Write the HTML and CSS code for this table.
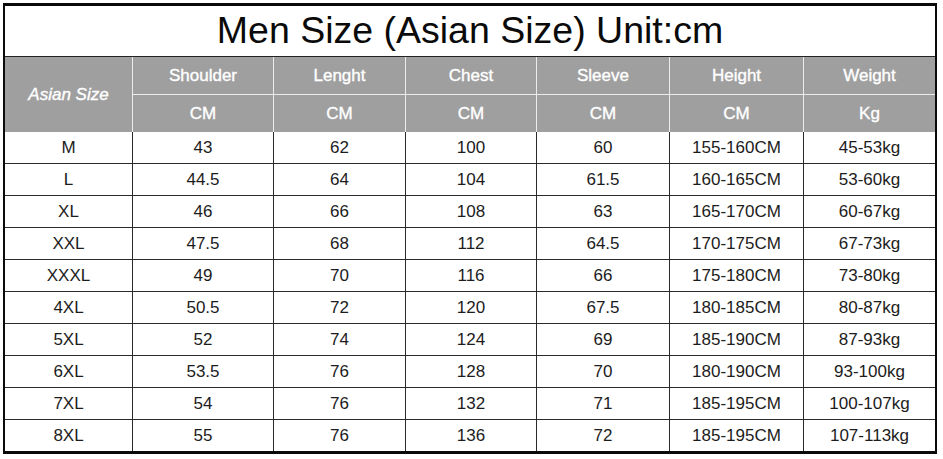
FILE: index.html
```html
<!DOCTYPE html>
<html>
<head>
<meta charset="utf-8">
<link rel="stylesheet" href="styles.css">
</head>
<body>
<div class="sheet">
  <div class="title">Men Size (Asian Size) Unit:cm</div>
  <div class="head">
    <div class="hc size">Asian Size</div>
    <div class="hc top">Shoulder</div>
    <div class="hc top">Lenght</div>
    <div class="hc top">Chest</div>
    <div class="hc top">Sleeve</div>
    <div class="hc top">Height</div>
    <div class="hc top end">Weight</div>
    <div class="hc">CM</div>
    <div class="hc">CM</div>
    <div class="hc">CM</div>
    <div class="hc">CM</div>
    <div class="hc">CM</div>
    <div class="hc end">Kg</div>
  </div>
  <div class="body">
    <div class="row"><div>M</div><div>43</div><div>62</div><div>100</div><div>60</div><div>155-160CM</div><div>45-53kg</div></div>
    <div class="row"><div>L</div><div>44.5</div><div>64</div><div>104</div><div>61.5</div><div>160-165CM</div><div>53-60kg</div></div>
    <div class="row"><div>XL</div><div>46</div><div>66</div><div>108</div><div>63</div><div>165-170CM</div><div>60-67kg</div></div>
    <div class="row"><div>XXL</div><div>47.5</div><div>68</div><div>112</div><div>64.5</div><div>170-175CM</div><div>67-73kg</div></div>
    <div class="row"><div>XXXL</div><div>49</div><div>70</div><div>116</div><div>66</div><div>175-180CM</div><div>73-80kg</div></div>
    <div class="row"><div>4XL</div><div>50.5</div><div>72</div><div>120</div><div>67.5</div><div>180-185CM</div><div>80-87kg</div></div>
    <div class="row"><div>5XL</div><div>52</div><div>74</div><div>124</div><div>69</div><div>185-190CM</div><div>87-93kg</div></div>
    <div class="row"><div>6XL</div><div>53.5</div><div>76</div><div>128</div><div>70</div><div>180-190CM</div><div>93-100kg</div></div>
    <div class="row"><div>7XL</div><div>54</div><div>76</div><div>132</div><div>71</div><div>185-195CM</div><div>100-107kg</div></div>
    <div class="row"><div>8XL</div><div>55</div><div>76</div><div>136</div><div>72</div><div>185-195CM</div><div>107-113kg</div></div>
  </div>
</div>
</body>
</html>
```

FILE: styles.css
```css
* { box-sizing: border-box; }
html, body { margin: 0; padding: 0; background: #ffffff; }
body { font-family: "Liberation Sans", Arial, sans-serif; }

.sheet {
  margin: 3px 0 0 3px;
  width: 934px;
  border-top: 3px solid #0a0a0a;
  border-bottom: 3px solid #0a0a0a;
  border-left: 2px solid #0a0a0a;
  border-right: 2px solid #0a0a0a;
  background: #fff;
}

.title {
  height: 51px;
  border-bottom: 1px solid #222;
  display: flex;
  align-items: center;
  justify-content: center;
  font-size: 37.5px;
  color: #0a0a0a;
  padding-bottom: 1px;
}

.head {
  display: grid;
  grid-template-columns: 128px 141px 132px 131px 133px 134px 131px;
  grid-template-rows: 38px 37px;
  background: #9f9f9f;
}

.hc {
  display: flex;
  align-items: center;
  justify-content: center;
  color: #ffffff;
  font-size: 17px;
  -webkit-text-stroke: 0.35px #ffffff;
  border-right: 1px solid #ececec;
}
.hc.top { border-bottom: 1px solid #ececec; }
.hc.end { border-right: none; }
.hc.size {
  grid-row: span 2;
  font-style: italic;
}

.row {
  display: grid;
  grid-template-columns: 128px 141px 132px 131px 133px 134px 131px;
  height: 32px;
  border-bottom: 1px solid #2a2a2a;
}
.row:last-child { border-bottom: none; height: 31px; }
.row > div {
  display: flex;
  align-items: center;
  justify-content: center;
  font-size: 17px;
  color: #1c1c1c;
  border-right: 1px solid #2a2a2a;
}
.row > div:last-child { border-right: none; }
```
